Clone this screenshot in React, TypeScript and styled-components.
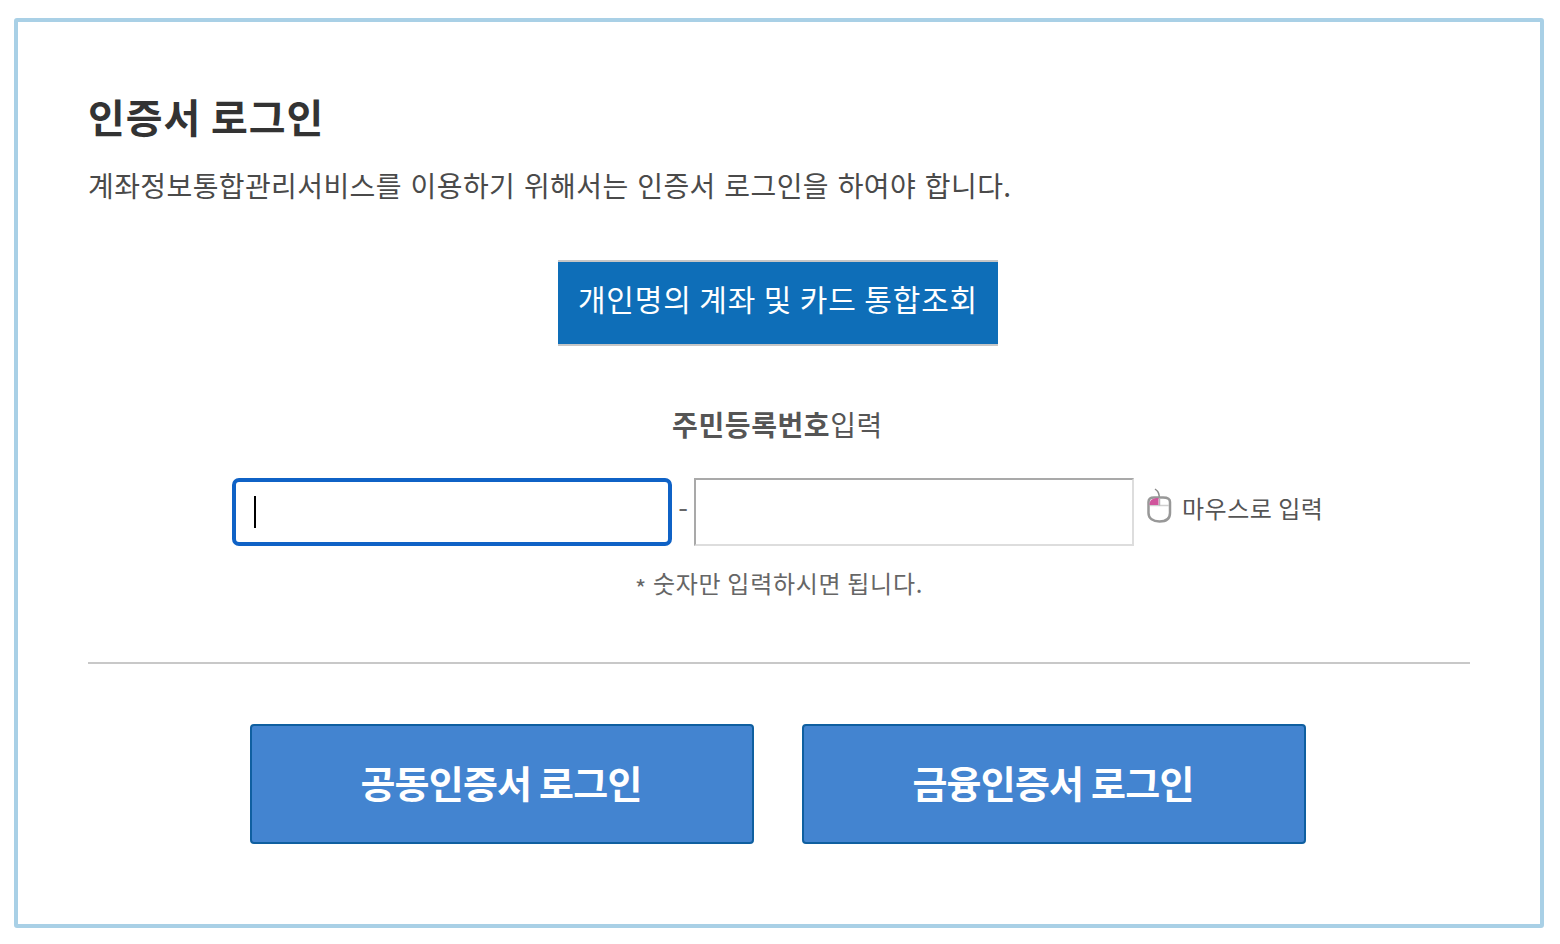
import React from 'react';
import styled, { createGlobalStyle } from 'styled-components';

const GlobalStyle = createGlobalStyle`
  html, body {
    margin: 0;
    padding: 0;
    background: #fff;
  }
  body {
    font-family: "Noto Sans CJK KR", "Noto Sans", sans-serif;
    color: #444;
  }
`;

const Page = styled.div`
  box-sizing: border-box;
  width: 1560px;
  height: 944px;
  padding: 18px 16px 16px 14px;
`;

const Frame = styled.section`
  box-sizing: border-box;
  height: 910px;
  padding: 68px 70px 0;
  border: 4px solid #a9d0e6;
  border-radius: 3px;
`;

const Title = styled.h1`
  margin: 0;
  height: 52px;
  font-size: 40px;
  line-height: 52px;
  font-weight: 700;
  letter-spacing: 0.9px;
  color: #333;
`;

const Lead = styled.p`
  margin: 23px 0 0;
  height: 40px;
  font-size: 28px;
  line-height: 40px;
  font-weight: 400;
  letter-spacing: 0.4px;
  word-spacing: 2px;
  color: #4a4a4a;
`;

const ButtonRow = styled.div`
  display: flex;
  justify-content: center;
  margin-top: 55px;
  padding-right: 2px;
`;

const QueryButton = styled.button`
  box-sizing: border-box;
  width: 440px;
  height: 86px;
  padding: 0 0 10px;
  border: 0;
  border-top: 2px solid #c6c6c6;
  border-bottom: 2px solid #c6c6c6;
  background: #0e6eb8;
  color: #fff;
  font: 400 30px/40px "Noto Sans CJK KR", sans-serif;
  letter-spacing: 0.85px;
`;

const FieldLabel = styled.div`
  margin-top: 58px;
  padding-right: 3px;
  height: 40px;
  text-align: center;
  font-size: 28px;
  line-height: 40px;
  letter-spacing: 0.6px;
  color: #555;

  strong {
    font-weight: 700;
  }
`;

const FieldRow = styled.div`
  display: flex;
  align-items: center;
  justify-content: center;
  height: 68px;
  margin-top: 34px;
  padding-right: 2px;
`;

const FieldBox = styled.div`
  position: relative;
`;

const NumberInput = styled.input<{ $focused?: boolean }>`
  display: block;
  box-sizing: border-box;
  width: 440px;
  height: 68px;
  padding: 0 20px;
  background: #fff;
  outline: none;
  border-radius: ${({ $focused }) => ($focused ? '7px' : '0')};
  border: ${({ $focused }) => ($focused ? '4px solid #0f62c6' : '2px solid #ddd')};
  border-top-color: ${({ $focused }) => ($focused ? '#0f62c6' : '#a9a9a9')};
  border-left-color: ${({ $focused }) => ($focused ? '#0f62c6' : '#a9a9a9')};
`;

const Caret = styled.span`
  position: absolute;
  left: 22px;
  top: 18px;
  width: 2px;
  height: 32px;
  background: #000;
`;

const Dash = styled.span`
  width: 22px;
  padding-bottom: 12px;
  text-align: center;
  font-size: 28px;
  line-height: 1;
  color: #666;
`;

const MouseLink = styled.span`
  display: flex;
  align-items: center;
  gap: 9px;
  width: 178px;
  margin-left: 12px;
  padding-bottom: 8px;
  white-space: nowrap;
  font-size: 24px;
  line-height: 34px;
  letter-spacing: 0.5px;
  color: #555;

  svg {
    margin-bottom: 4px;
  }
`;

const Hint = styled.p`
  margin: 19px 0 0;
  height: 36px;
  text-align: center;
  font-size: 24px;
  line-height: 36px;
  letter-spacing: 0.7px;
  color: #666;
`;

const Asterisk = styled.span`
  vertical-align: -5px;
  line-height: 1;
`;

const Divider = styled.hr`
  margin: 61px 0 0;
  border: 0;
  border-top: 2px solid #c8c8c8;
`;

const LoginRow = styled.div`
  display: flex;
  justify-content: center;
  gap: 48px;
  margin-top: 60px;
  padding-right: 2px;
`;

const LoginButton = styled.button`
  box-sizing: border-box;
  width: 504px;
  height: 120px;
  padding: 0 2px 4px 0;
  border: 2px solid #0f5fa0;
  border-radius: 4px;
  background: #4384d0;
  color: #fff;
  font: 700 38px/50px "Noto Sans CJK KR", sans-serif;
  letter-spacing: -0.8px;
`;

const MouseIcon = () => (
  <svg width="27" height="36" viewBox="0 0 27 36" fill="none">
    <path d="M13 11C14 6 12 3 9 1" stroke="#8a8a8a" strokeWidth="1.5" />
    <path
      d="M2.500 14C2.500 11 5 9.500 8 9.500H17C21 9.500 24 11 24 14V25C24 30.500 20 33.500 13.500 33.500C7 33.500 2.500 30.500 2.500 25Z"
      fill="#fff"
      stroke="#989898"
      strokeWidth="2.500"
    />
    <path d="M4 17.500H23" stroke="#cfcfcf" strokeWidth="1.500" />
    <path d="M13.500 10V17.500" stroke="#b5b5b5" strokeWidth="1.500" />
    <path d="M3.500 17C3.500 12 6 10 12.500 10V17Z" fill="#d0559c" />
  </svg>
);

export default function App() {
  return (
    <Page>
      <GlobalStyle />
      <Frame>
        <Title>인증서 로그인</Title>
        <Lead>계좌정보통합관리서비스를 이용하기 위해서는 인증서 로그인을 하여야 합니다.</Lead>
        <ButtonRow>
          <QueryButton type="button">개인명의 계좌 및 카드 통합조회</QueryButton>
        </ButtonRow>
        <FieldLabel>
          <strong>주민등록번호</strong>입력
        </FieldLabel>
        <FieldRow>
          <FieldBox>
            <NumberInput $focused readOnly aria-label="주민등록번호 앞자리" />
            <Caret />
          </FieldBox>
          <Dash>-</Dash>
          <FieldBox>
            <NumberInput readOnly aria-label="주민등록번호 뒷자리" />
          </FieldBox>
          <MouseLink>
            <MouseIcon />
            마우스로 입력
          </MouseLink>
        </FieldRow>
        <Hint>
          <Asterisk>*</Asterisk> 숫자만 입력하시면 됩니다.
        </Hint>
        <Divider />
        <LoginRow>
          <LoginButton type="button">공동인증서 로그인</LoginButton>
          <LoginButton type="button">금융인증서 로그인</LoginButton>
        </LoginRow>
      </Frame>
    </Page>
  );
}
